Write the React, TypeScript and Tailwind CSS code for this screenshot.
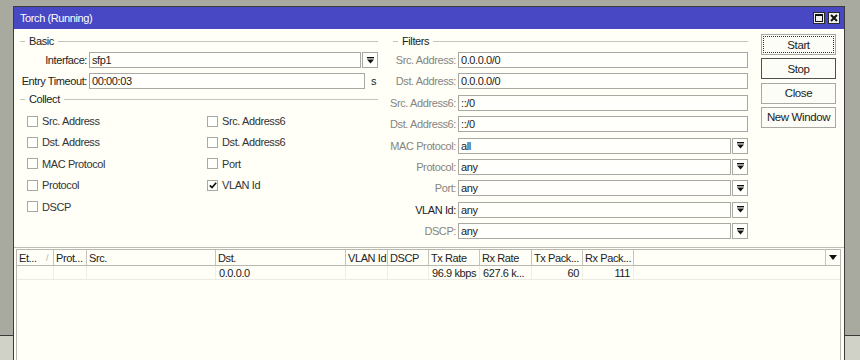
import React from 'react'

const font = "font-['Liberation_Sans',Arial,sans-serif] text-[11px] leading-[14px] tracking-[-0.4px]"

function DropGlyph() {
  return (
    <svg width="7" height="7" viewBox="0 0 7 7">
      <rect x="0" y="0" width="7" height="1.4" fill="#111" />
      <polygon points="0,2.4 7,2.4 3.5,6.6" fill="#111" />
    </svg>
  )
}

function Legend({ title }: { title: string }) {
  return (
    <div className="flex h-[14px] items-center gap-[4px]">
      <div className="h-px w-[5px] bg-[#c4c4bc]" />
      <span className="text-[#222]">{title}</span>
      <div className="h-px flex-1 bg-[#c4c4bc]" />
    </div>
  )
}

function Field({ value, drop, suffix }: { value: string; drop?: boolean; suffix?: string }) {
  return (
    <div className="flex h-[16px] flex-1 items-stretch gap-px">
      <div className="flex flex-1 items-center border border-[#a9a9a3] bg-[#fffffb] px-[2px] text-[#222]">{value}</div>
      {drop && (
        <div className="flex w-[16px] items-center justify-center border border-[#a9a9a3] bg-[#fffffb]">
          <DropGlyph />
        </div>
      )}
      {suffix && <span className="flex w-[12px] items-center justify-end pr-[2px] text-[#222]">{suffix}</span>}
    </div>
  )
}

function Check({ label, checked }: { label: string; checked?: boolean }) {
  return (
    <div className="flex h-[16px] items-center gap-[4px]">
      <div className="flex h-[11px] w-[11px] items-center justify-center border border-[#a9a9a3] bg-[#fffffb]">
        {checked && (
          <svg width="8" height="7" viewBox="0 0 8 7">
            <path d="M0.8 3.4 L3 5.6 L7.2 0.8" stroke="#111" strokeWidth="1.7" fill="none" />
          </svg>
        )}
      </div>
      <span className="text-[#333]">{label}</span>
    </div>
  )
}

const filters: { label: string; value: string; drop?: boolean; dark?: boolean }[] = [
  { label: 'Src. Address:', value: '0.0.0.0/0' },
  { label: 'Dst. Address:', value: '0.0.0.0/0' },
  { label: 'Src. Address6:', value: '::/0' },
  { label: 'Dst. Address6:', value: '::/0' },
  { label: 'MAC Protocol:', value: 'all', drop: true },
  { label: 'Protocol:', value: 'any', drop: true },
  { label: 'Port:', value: 'any', drop: true },
  { label: 'VLAN Id:', value: 'any', drop: true, dark: true },
  { label: 'DSCP:', value: 'any', drop: true },
]

const columns: { name: string; w: number }[] = [
  { name: 'Et...', w: 37 },
  { name: 'Prot...', w: 33 },
  { name: 'Src.', w: 129 },
  { name: 'Dst.', w: 130 },
  { name: 'VLAN Id', w: 42 },
  { name: 'DSCP', w: 41 },
  { name: 'Tx Rate', w: 51 },
  { name: 'Rx Rate', w: 52 },
  { name: 'Tx Pack...', w: 51 },
  { name: 'Rx Pack...', w: 51 },
]

const row: { v: string; right?: boolean }[] = [
  { v: '' },
  { v: '' },
  { v: '' },
  { v: '0.0.0.0' },
  { v: '' },
  { v: '' },
  { v: '96.9 kbps' },
  { v: '627.6 k...' },
  { v: '60', right: true },
  { v: '111', right: true },
]

export default function App() {
  return (
    <div className={`relative flex h-[360px] w-[860px] flex-col overflow-hidden bg-[#a8aa9f] ${font}`}>
      <div className="h-[335px]" />
      <div className="flex-1 border-t border-[#3a3a38] bg-[#d0d2c8]" />

      {/* window */}
      <div className="absolute left-[13px] top-[6px] flex h-[380px] w-[832px] flex-col border border-[#3c3c3c] bg-[#fffff8]">
        {/* title bar */}
        <div className="flex h-[22px] items-center justify-between bg-[#4848c4] pl-[6px] pr-[4px]">
          <span className="text-white">Torch (Running)</span>
          <div className="flex gap-[3px]">
            <div className="flex h-[12px] w-[12px] items-center justify-center border border-[#2a2a2a] bg-[#f0f0ec]">
              <svg width="8" height="8" viewBox="0 0 8 8">
                <rect x="0.5" y="0.5" width="7" height="7" fill="none" stroke="#111" />
                <rect x="0" y="0" width="8" height="2" fill="#111" />
              </svg>
            </div>
            <div className="flex h-[12px] w-[12px] items-center justify-center border border-[#2a2a2a] bg-[#f0f0ec]">
              <svg width="8" height="8" viewBox="0 0 8 8">
                <path d="M1 1 L7 7 M7 1 L1 7" stroke="#111" strokeWidth="2" />
              </svg>
            </div>
          </div>
        </div>

        {/* top form */}
        <div className="flex h-[218px] pl-[6px] pt-[5px]">
          {/* left column */}
          <div className="flex w-[358px] flex-col">
            <Legend title="Basic" />
            <div className="mt-[4px] flex flex-col gap-[5px]">
              <div className="flex items-center gap-[2px]">
                <span className="flex w-[67px] justify-end whitespace-nowrap text-[#222]">Interface:</span>
                <Field value="sfp1" drop />
              </div>
              <div className="flex items-center gap-[2px]">
                <span className="flex w-[67px] justify-end whitespace-nowrap text-[#222]">Entry Timeout:</span>
                <Field value="00:00:03" suffix="s" />
              </div>
            </div>
            <div className="mt-[3px]">
              <Legend title="Collect" />
            </div>
            <div className="ml-[7px] mt-[7px] grid grid-cols-[180px_1fr] gap-y-[5.4px]">
              <Check label="Src. Address" />
              <Check label="Src. Address6" />
              <Check label="Dst. Address" />
              <Check label="Dst. Address6" />
              <Check label="MAC Protocol" />
              <Check label="Port" />
              <Check label="Protocol" />
              <Check label="VLAN Id" checked />
              <Check label="DSCP" />
            </div>
          </div>

          {/* filters column */}
          <div className="ml-[15px] flex w-[355px] flex-col">
            <Legend title="Filters" />
            <div className="mt-[4px] flex flex-col gap-[5.4px]">
              {filters.map((f) => (
                <div key={f.label} className="flex items-center gap-[2px]">
                  <span className={`flex w-[63px] justify-end whitespace-nowrap ${f.dark ? 'text-[#222]' : 'text-[#858580]'}`}>
                    {f.label}
                  </span>
                  <Field value={f.value} drop={f.drop} />
                </div>
              ))}
            </div>
          </div>

          {/* buttons */}
          <div className="ml-[13px] flex w-[75px] flex-col gap-[3.3px] text-[11.5px]">
            {['Start', 'Stop', 'Close', 'New Window'].map((b) => (
              <div
                key={b}
                className={`flex h-[21px] items-center justify-center border bg-[#fdfdf7] text-[#222] ${
                  b === 'Stop' ? 'border-[#505050]' : 'border-[#a9a9a3]'
                }`}
              >
                {b === 'Start' ? (
                  <div className="flex h-[17px] w-[71px] items-center justify-center border border-dotted border-[#333]">Start</div>
                ) : (
                  b
                )}
              </div>
            ))}
          </div>
        </div>

        <div className="h-px bg-[#bdbdb6]" />

        {/* table */}
        <div className="ml-[2px] mr-[3px] mt-px flex flex-1 flex-col border-x border-[#b8b8b0]">
          <div className="flex h-[17px] border-y border-[#b8b8b0]">
            {columns.map((c, i) => (
              <div
                key={c.name}
                style={{ width: c.w }}
                className="flex shrink-0 items-center justify-between overflow-hidden whitespace-nowrap border-r border-[#c4c4bc] px-[2px] text-[#222]"
              >
                <span>{c.name}</span>
                {i === 0 && <span className="pr-[3px] text-[9px] text-[#b0b0a8]">/</span>}
              </div>
            ))}
            <div className="flex-1 border-r border-[#c4c4bc]" />
            <div className="flex w-[14px] items-center justify-center">
              <svg width="8" height="5" viewBox="0 0 8 5">
                <polygon points="0,0 8,0 4,5" fill="#111" />
              </svg>
            </div>
          </div>
          <div className="flex h-[14px] border-b border-[#ebebe3]">
            {row.map((c, i) => (
              <div
                key={i}
                style={{ width: columns[i].w }}
                className={`flex shrink-0 items-center overflow-hidden whitespace-nowrap border-r border-[#efefe7] px-[3px] text-[#222] ${c.right ? 'justify-end' : ''}`}
              >
                {c.v}
              </div>
            ))}
            <div className="flex-1" />
          </div>
        </div>
      </div>
    </div>
  )
}
